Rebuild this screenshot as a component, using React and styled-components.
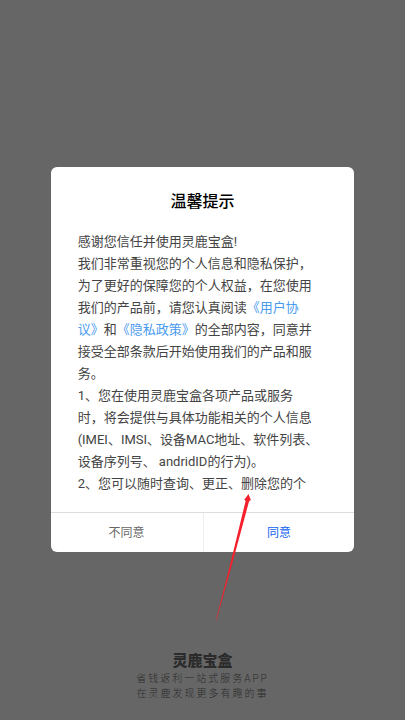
import styled, { createGlobalStyle } from 'styled-components';

const paragraphs = [
  ['感谢您信任并使用灵鹿宝盒!'],
  [
    '我们非常重视您的个人信息和隐私保护，',
    '为了更好的保障您的个人权益，在您使用',
    <>
      我们的产品前，请您认真阅读
      <PolicyLink href="#agreement">《用户协</PolicyLink>
    </>,
    <>
      <PolicyLink href="#agreement">议》</PolicyLink>和
      <PolicyLink href="#privacy">《隐私政策》</PolicyLink>的全部内容，同意并
    </>,
    '接受全部条款后开始使用我们的产品和服',
    '务。',
  ],
  [
    '1、您在使用灵鹿宝盒各项产品或服务',
    '时，将会提供与具体功能相关的个人信息',
    '(IMEI、IMSI、设备MAC地址、软件列表、',
    '设备序列号、 andridID的行为)。',
  ],
  ['2、您可以随时查询、更正、删除您的个'],
];

function PolicyLink({ href, children }) {
  return <StyledLink href={href}>{children}</StyledLink>;
}

function App() {
  return (
    <>
      <GlobalStyle />
      <Screen>
        <Dialog role="dialog" aria-labelledby="notice-title">
          <Title id="notice-title">温馨提示</Title>
          <Content>
            {paragraphs.map((lines, index) => (
              <Paragraph key={index}>
                {lines.map((line, i) => (
                  <Line key={i}>{line}</Line>
                ))}
              </Paragraph>
            ))}
          </Content>
          <Actions>
            <ActionButton type="button">不同意</ActionButton>
            <ActionButton type="button" $primary>
              同意
            </ActionButton>
          </Actions>
          <Arrow viewBox="0 0 40 130" aria-hidden="true">
            <path
              d="M36.5 1 L38.8 7 L37 8.5 L21.5 66 L4.5 127 L4 127 L19.5 66 L33.6 8 L32.4 6.5 Z"
              fill="#f5202b"
            />
          </Arrow>
        </Dialog>
        <Brand>
          <BrandName>灵鹿宝盒</BrandName>
          <Slogan>省钱返利一站式服务APP</Slogan>
          <Slogan>在灵鹿发现更多有趣的事</Slogan>
        </Brand>
      </Screen>
    </>
  );
}

export default App;

const GlobalStyle = createGlobalStyle`
  * {
    box-sizing: border-box;
    margin: 0;
    padding: 0;
  }
  body {
    background-color: #666;
    font-family: Roboto, 'Noto Sans CJK SC', sans-serif;
  }
`;

const Screen = styled.main`
  display: grid;
  grid-template-rows: 1fr auto 1fr;
  justify-items: center;
  min-height: 100vh;
  padding-bottom: 1px;
  background-color: #666;
`;

const Dialog = styled.section`
  position: relative;
  grid-row: 2;
  width: 75%;
  background-color: #fff;
  border-radius: 6px;
`;

const Title = styled.h1`
  padding-top: 23px;
  font-size: 16px;
  line-height: 24px;
  font-weight: 500;
  text-align: center;
  color: #000;
`;

const Content = styled.div`
  padding: 17px 0 17px 27px;
  font-size: 13px;
  line-height: 22px;
  color: #444;
`;

const Paragraph = styled.p`
  white-space: nowrap;
`;

const Line = styled.span`
  display: block;
`;

const StyledLink = styled.a`
  color: #4a9bf0;
  text-decoration: none;
`;

const Actions = styled.div`
  display: grid;
  grid-template-columns: 1fr 1fr;
  height: 40px;
  border-top: 1px solid #ddd;
`;

const ActionButton = styled.button`
  border: none;
  border-left: ${({ $primary }) => ($primary ? '1px solid #eee' : 'none')};
  background: none;
  font-family: inherit;
  font-size: 12px;
  line-height: 20px;
  color: ${({ $primary }) => ($primary ? '#1262f0' : '#666')};
  cursor: pointer;
`;

/* pointer drawn over the dialog and the backdrop */
const Arrow = styled.svg`
  position: absolute;
  top: 326px;
  left: 161px;
  width: 40px;
  height: 130px;
  pointer-events: none;
`;

const Brand = styled.footer`
  grid-row: 3;
  align-self: end;
  padding-bottom: 18px;
  text-align: center;
  color: #2b2b2b;
`;

const BrandName = styled.h2`
  font-size: 15px;
  line-height: 20px;
  font-weight: 900;
`;

const Slogan = styled.p`
  font-size: 10px;
  line-height: 15px;
  font-weight: 300;
  letter-spacing: 2px;
`;
